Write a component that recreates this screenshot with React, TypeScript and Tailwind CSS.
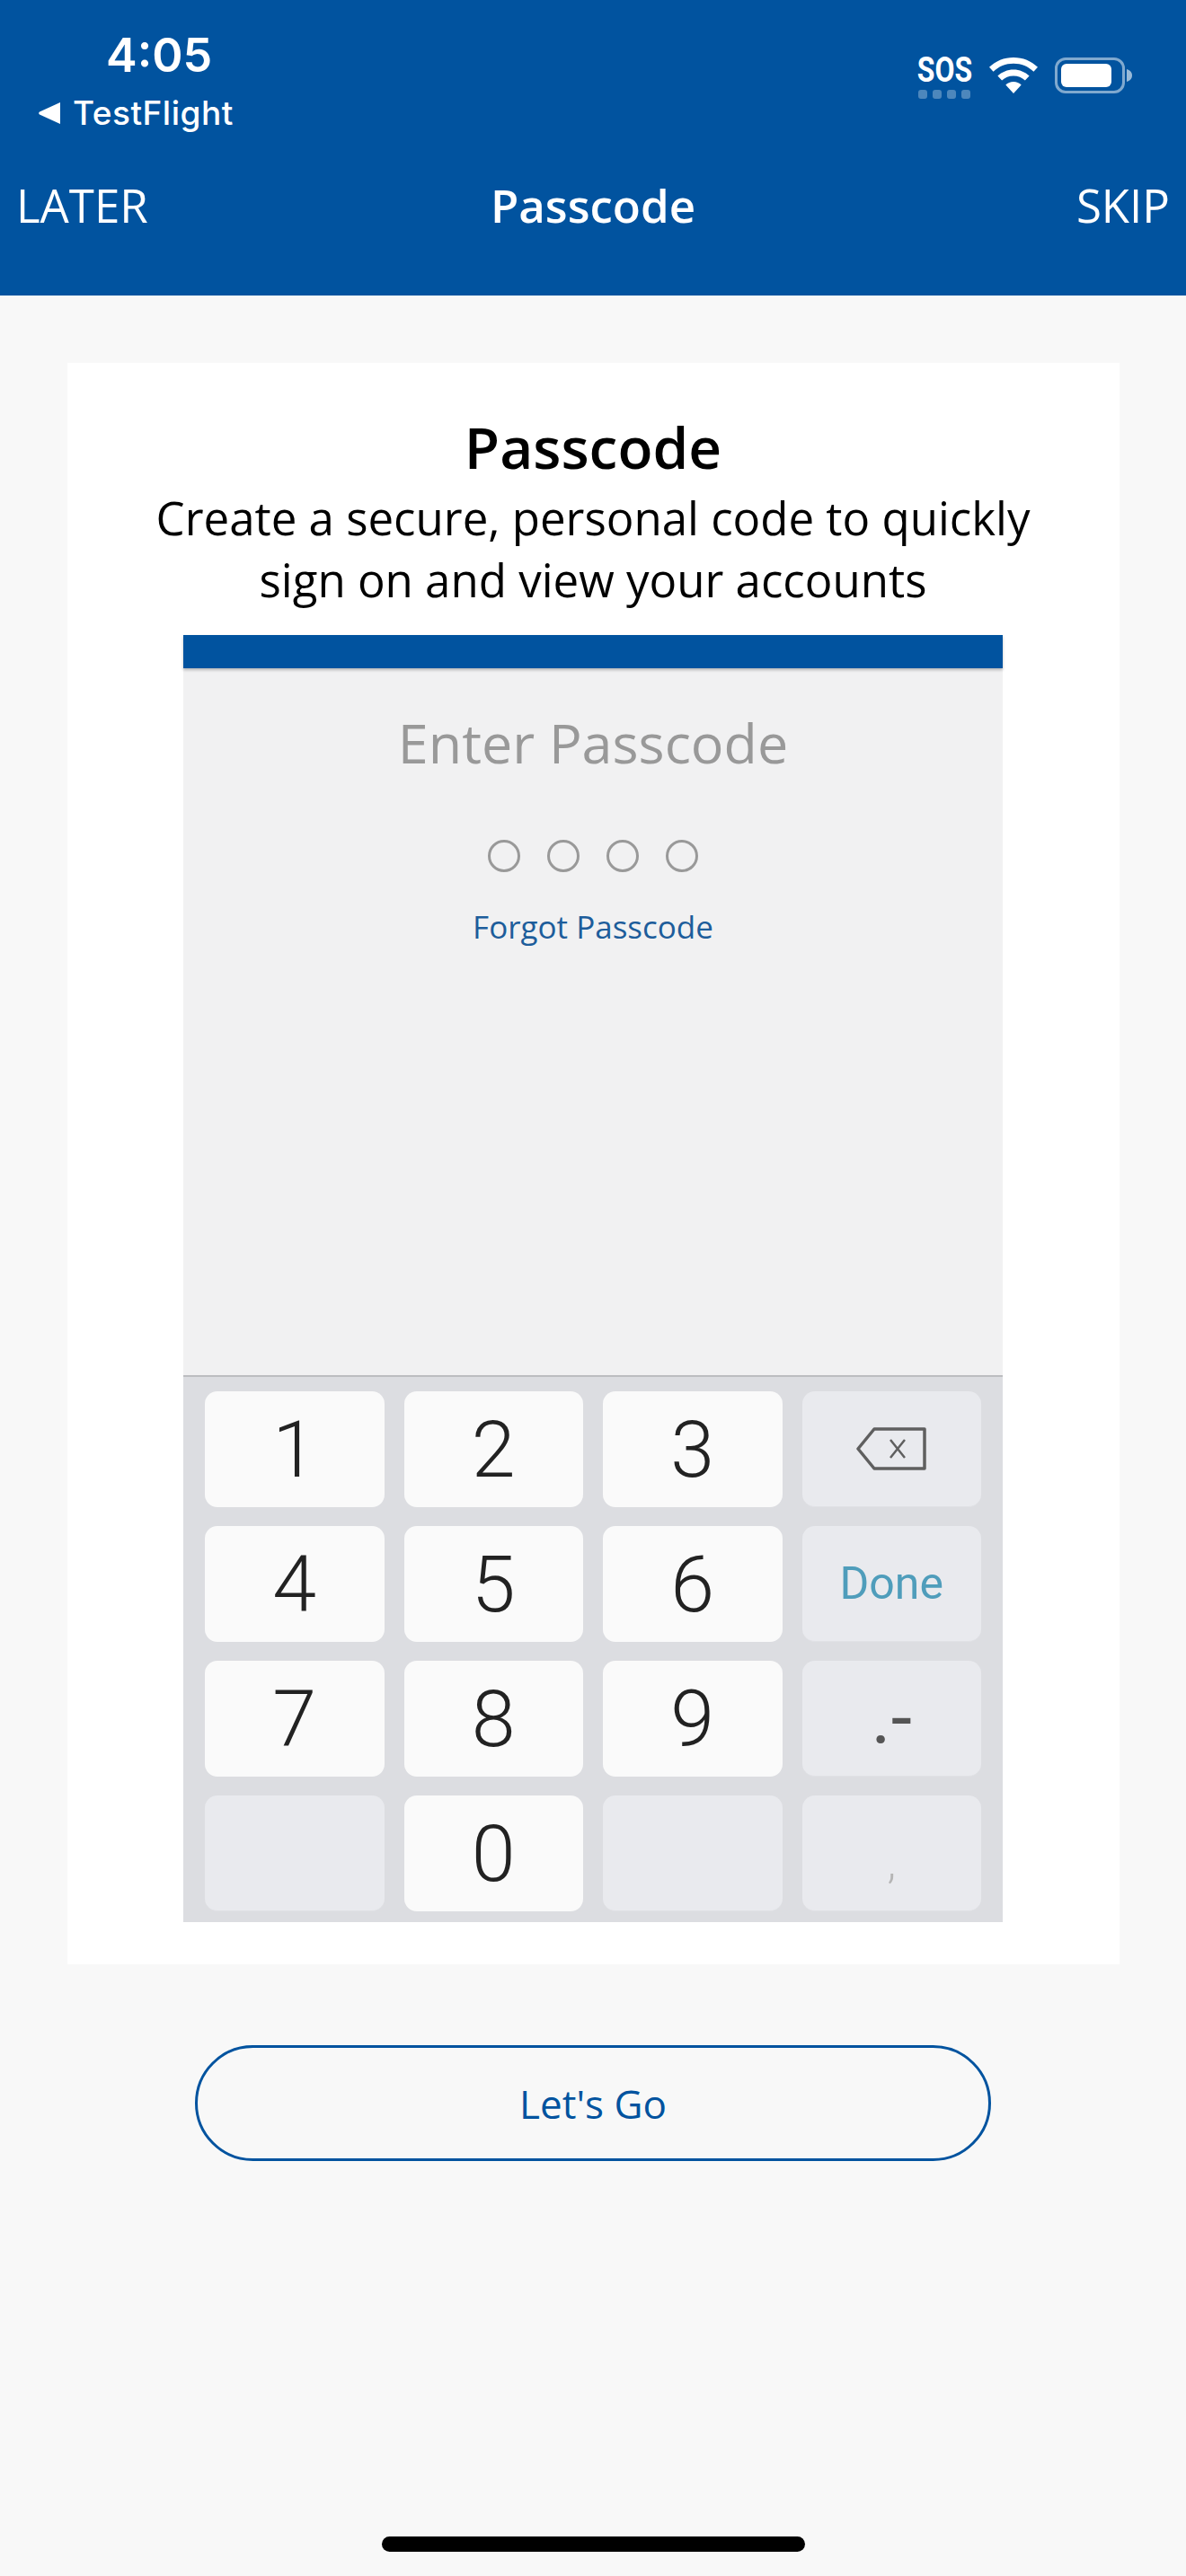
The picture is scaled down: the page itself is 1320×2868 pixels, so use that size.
import React from 'react';

const openSans = "font-['Open_Sans',sans-serif]";
const roboto = "font-['Roboto',sans-serif]";
const inter = "font-['Inter',sans-serif]";

const WifiIcon = () => (
  <svg width="56" height="40" viewBox="0 0 56 40" fill="#fff">
    <path d="M28 0C17.500 0 8 4 1 10.800l4.600 5C11.500 10 19.300 6.800 28 6.800S44.500 10 50.400 15.800l4.600-5C48 4 38.500 0 28 0Z" />
    <path d="M28 13.500c-6.800 0-13 2.700-17.600 7l4.700 5c3.400-3.200 7.900-5.100 12.900-5.100s9.500 1.900 12.900 5.100l4.700-5c-4.600-4.300-10.800-7-17.600-7Z" />
    <path d="M28 27c-3.400 0-6.400 1.300-8.700 3.500L28 40l8.700-9.500C34.400 28.300 31.400 27 28 27Z" />
  </svg>
);

const BatteryIcon = () => (
  <div className="flex items-center">
    <div className="w-[78px] h-[40px] rounded-[12px] border-[3px] border-white/50 p-[4px]">
      <div className="w-[56px] h-full rounded-[6px] bg-white" />
    </div>
    <svg className="ml-[2px]" width="6" height="14" viewBox="0 0 6 14" fill="#fff" fillOpacity="0.6">
      <path d="M0 0c3.500 1 6 3.500 6 7s-2.500 6-6 7Z" />
    </svg>
  </div>
);

const SosBadge = () => (
  <div className="flex flex-col items-center w-[62px]">
    <span className={`${roboto} font-bold text-[38px] leading-[28px] text-white scale-x-[0.84]`}>SOS</span>
    <div className="flex gap-[6px] mt-[8px]">
      {[0, 1, 2, 3].map((i) => (
        <div key={i} className="w-[10px] h-[10px] rounded-[3px] bg-white/30" />
      ))}
    </div>
  </div>
);

const BackspaceIcon = () => (
  <svg width="78" height="48" viewBox="0 0 78 48" fill="none" stroke="#5f5f5f" strokeWidth="3.500">
    <path d="M20 2h56v44H20L2 24Z" strokeLinejoin="round" />
    <path d="M38 14l16 20M54 14L38 34" strokeWidth="2.500" />
  </svg>
);

const DigitKey = ({ label }: { label: string }) => (
  <div className={`h-[129px] rounded-[14px] bg-[#fafafa] flex items-center justify-center ${roboto} font-light text-[88px] leading-none text-[#222]`}>
    {label}
  </div>
);

const FnKey = ({ children }: { children?: React.ReactNode }) => (
  <div className="h-[129px] rounded-[14px] bg-[#e9eaee] border-b border-[#e0e1e5] flex items-center justify-center">
    {children}
  </div>
);

export default function App() {
  return (
    <div className={`w-[1320px] h-[2868px] bg-[#f8f8f8] flex flex-col ${openSans}`}>
      {/* Blue app header with the system status bar on top */}
      <header className="h-[329px] bg-[#01539f] text-white flex flex-col shrink-0">
        <div className="flex justify-between pt-[36px] pl-[43px] pr-[60px] h-[198px]">
          <div className="flex flex-col">
            <span className={`${inter} font-semibold text-[52px] leading-[52px] ml-[75px]`}>4:05</span>
            <div className="flex items-center gap-[14px] mt-[18px]">
              <svg width="24" height="24" viewBox="0 0 24 24" fill="#fff">
                <path d="M24 0v24L1 13.500a2 2 0 0 1 0-3Z" />
              </svg>
              <span className={`${inter} font-medium text-[37px] leading-[40px] tracking-[0.5px]`}>TestFlight</span>
            </div>
          </div>
          <div className="flex items-start gap-[18px] pt-[28px]">
            <SosBadge />
            <WifiIcon />
            <BatteryIcon />
          </div>
        </div>
        <div className="grid grid-cols-[1fr_auto_1fr] items-center px-[18px] h-[60px] text-[51px] leading-[60px]">
          <span>LATER</span>
          <span className="font-semibold">Passcode</span>
          <span className="text-right">SKIP</span>
        </div>
      </header>

      <main className="flex flex-col items-center pt-[75px]">
        <section className="w-[1171px] h-[1783px] bg-white flex flex-col items-center pt-[50px]">
          <h1 className="font-semibold text-[64px] leading-[88px] text-black">Passcode</h1>
          <p className="text-[51px] leading-[69px] text-black text-center">
            Create a secure, personal code to quickly
            <br />
            sign on and view your accounts
          </p>

          {/* Preview of the passcode screen on a phone */}
          <div className="w-[912px] mt-[27px] flex flex-col">
            <div className="h-[37px] bg-[#01539f] shadow-[0_2px_3px_rgba(0,0,0,0.25)] relative" />
            <div className="h-[787px] bg-[#f1f1f2] flex flex-col items-center pt-[42px]">
              <div className="text-[61px] leading-[82px] text-[#999]">Enter Passcode</div>
              <div className="flex gap-[30px] mt-[67px]">
                {[0, 1, 2, 3].map((i) => (
                  <div key={i} className="w-[36px] h-[36px] rounded-full border-[3px] border-[#999]" />
                ))}
              </div>
              <div className="text-[35px] leading-[50px] text-[#1d5d9b] mt-[36px]">Forgot Passcode</div>
            </div>
            <div className="h-[609px] bg-[#dcdde1] border-t-2 border-[#bcbdc0] px-[24px] pt-[16px] grid grid-cols-4 gap-x-[22px] gap-y-[21px] content-start">
              <DigitKey label="1" />
              <DigitKey label="2" />
              <DigitKey label="3" />
              <FnKey>
                <BackspaceIcon />
              </FnKey>
              <DigitKey label="4" />
              <DigitKey label="5" />
              <DigitKey label="6" />
              <FnKey>
                <span className={`${roboto} text-[50px] text-[#4f9dbb]`}>Done</span>
              </FnKey>
              <DigitKey label="7" />
              <DigitKey label="8" />
              <DigitKey label="9" />
              <FnKey>
                <span className={`${roboto} text-[84px] leading-none text-[#555]`}>.-</span>
              </FnKey>
              <FnKey />
              <DigitKey label="0" />
              <FnKey />
              <FnKey>
                <span className={`${roboto} font-light text-[50px] leading-none text-[#b5b5b5] mt-[22px]`}>,</span>
              </FnKey>
            </div>
          </div>
        </section>

        <button className="w-[886px] h-[129px] mt-[90px] rounded-full border-[3px] border-[#01539f] text-[44px] text-[#01539f] flex items-center justify-center">
          Let's Go
        </button>
      </main>

      {/* Home indicator */}
      <div className="mt-auto mb-[27px] mx-auto w-[471px] h-[17px] rounded-full bg-black" />
    </div>
  );
}
